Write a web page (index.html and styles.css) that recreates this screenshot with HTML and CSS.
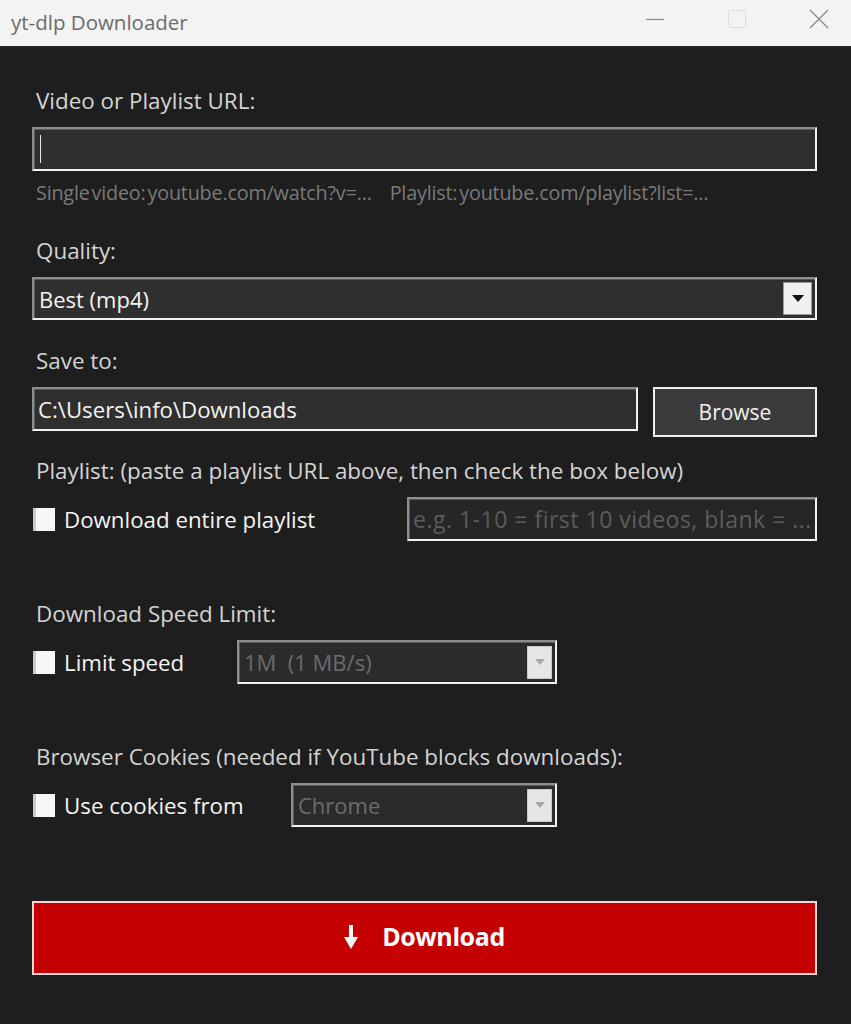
FILE: index.html
```html
<!DOCTYPE html>
<html lang="en">
<head>
<meta charset="utf-8">
<title>yt-dlp Downloader</title>
<link rel="stylesheet" href="styles.css">
</head>
<body>
<div class="window">
  <header class="titlebar">
    <span class="title">yt-dlp Downloader</span>
    <div class="controls">
      <span class="ctl ctl-min"><svg width="20" height="20" viewBox="0 0 20 20"><line x1="1" y1="10.5" x2="19" y2="10.5" stroke="#8a8a8a" stroke-width="1.2"/></svg></span>
      <span class="ctl ctl-max"><svg width="20" height="20" viewBox="0 0 20 20"><rect x="1.5" y="1.5" width="17" height="17" rx="1" fill="none" stroke="#dedede" stroke-width="1"/></svg></span>
      <span class="ctl ctl-close"><svg width="20" height="20" viewBox="0 0 20 20"><path d="M1 1 L19 19 M19 1 L1 19" stroke="#8a8a8a" stroke-width="1.3" fill="none"/></svg></span>
    </div>
  </header>

  <main class="content">
    <div class="label first">Video or Playlist URL:</div>
    <div class="field field-url"><span class="caret"></span></div>
    <div class="hint"><span>Single video: youtube.com/watch?v=...</span><span>Playlist: youtube.com/playlist?list=...</span></div>

    <div class="label sec-quality">Quality:</div>
    <div class="combo combo-quality">
      <span class="combo-text">Best (mp4)</span>
      <span class="combo-btn"><svg width="12" height="8" viewBox="0 0 12 8"><path d="M0 0 H12 L6 7 Z" fill="#111"/></svg></span>
    </div>

    <div class="label sec-save">Save to:</div>
    <div class="row row-save">
      <div class="field field-path"><span class="field-text">C:\Users\info\Downloads</span></div>
      <button class="btn-browse">Browse</button>
    </div>

    <div class="label sec-playlist">Playlist: (paste a playlist URL above, then check the box below)</div>
    <div class="row row-check">
      <label class="check check-playlist"><span class="box"></span><span class="check-text">Download entire playlist</span></label>
      <div class="field field-range"><span class="placeholder">e.g. 1-10 = first 10 videos, blank = ...</span></div>
    </div>

    <div class="label sec-speed">Download Speed Limit:</div>
    <div class="row row-check">
      <label class="check check-speed"><span class="box"></span><span class="check-text">Limit speed</span></label>
      <div class="combo combo-disabled combo-speed">
        <span class="combo-text">1M&nbsp; (1 MB/s)</span>
        <span class="combo-btn"><svg width="10" height="6" viewBox="0 0 10 6"><path d="M0 0 H10 L5 6 Z" fill="#a8a8a8"/></svg></span>
      </div>
    </div>

    <div class="label sec-cookies">Browser Cookies (needed if YouTube blocks downloads):</div>
    <div class="row row-check">
      <label class="check check-cookies"><span class="box"></span><span class="check-text">Use cookies from</span></label>
      <div class="combo combo-disabled combo-cookies">
        <span class="combo-text">Chrome</span>
        <span class="combo-btn"><svg width="10" height="6" viewBox="0 0 10 6"><path d="M0 0 H10 L5 6 Z" fill="#a8a8a8"/></svg></span>
      </div>
    </div>

    <button class="btn-download">
      <svg class="dl-icon" width="14" height="24" viewBox="0 0 14 24"><rect x="5" y="0" width="4" height="14" fill="#fff"/><path d="M0 12 H14 L7 24 Z" fill="#fff"/></svg>
      <span>Download</span>
    </button>
  </main>
</div>
</body>
</html>
```

FILE: styles.css
```css
* { box-sizing: border-box; }

html, body {
  margin: 0;
  padding: 0;
  background: #1e1e1e;
}

body {
  font-family: "Open Sans", "Noto Sans", sans-serif;
  width: 851px;
  height: 1024px;
  overflow: hidden;
}

.window {
  width: 851px;
  height: 1024px;
  display: flex;
  flex-direction: column;
}

.titlebar {
  height: 47px;
  background: #f3f3f3;
  border-bottom: 1px solid #2a2a2a;
  display: flex;
  align-items: center;
  justify-content: space-between;
  padding-left: 11px;
  padding-right: 22px;
}

.title {
  font-family: "Open Sans", sans-serif;
  font-size: 20.5px;
  color: #6b6b6b;
  margin-top: -3px;
}

.controls {
  display: flex;
  align-items: center;
  gap: 62px;
  margin-top: -8px;
}

.ctl {
  display: flex;
}

.content {
  padding: 42px 34px 0 32px;
  display: flex;
  flex-direction: column;
}

.label {
  font-size: 22.4px;
  line-height: 24px;
  color: #d4d4d4;
  padding-left: 4px;
  white-space: nowrap;
}

.sec-quality { margin-top: 36px; }
.sec-save { margin-top: 29px; }
.sec-playlist { margin-top: 22px; }
.sec-speed { margin-top: 61px; }
.sec-cookies { margin-top: 61px; }

.field {
  height: 44px;
  background: #2f2f2f;
  border: 2px solid;
  border-color: #8e8e8e #f2f2f2 #f2f2f2 #8e8e8e;
  box-shadow: inset 1px 1px 0 #5a5a5a;
  display: flex;
  align-items: center;
  padding-left: 4px;
  overflow: hidden;
}

.field-url {
  margin-top: 14px;
  width: 785px;
}

.caret {
  display: block;
  width: 1px;
  height: 28px;
  background: #e8e8e8;
  margin-left: 2px;
}

.hint {
  margin-top: 12px;
  height: 20px;
  line-height: 20px;
  font-size: 19.8px;
  color: #7a7a7a;
  padding-left: 4px;
  letter-spacing: -0.2px;
  word-spacing: -3px;
  display: flex;
  gap: 18px;
  white-space: nowrap;
}

.combo {
  height: 43px;
  background: #2f2f2f;
  border: 2px solid;
  border-color: #8e8e8e #f2f2f2 #f2f2f2 #8e8e8e;
  box-shadow: inset 1px 1px 0 #5a5a5a;
  display: flex;
  align-items: center;
  justify-content: space-between;
  padding: 0 3px 0 5px;
}

.combo-quality {
  margin-top: 14px;
  width: 785px;
}

.combo-text {
  font-size: 22px;
  color: #f4f4f4;
  white-space: nowrap;
}

.combo-btn {
  width: 29px;
  height: 33px;
  background: #f0f0f0;
  border: 1px solid #9a9a9a;
  display: flex;
  align-items: center;
  justify-content: center;
  flex-shrink: 0;
}

.combo-disabled {
  background: #2b2b2b;
}

.combo-disabled .combo-text {
  color: #6b6b6b;
}

.combo-disabled .combo-btn {
  width: 25px;
  background: #e6e6e6;
  border-color: #c8c8c8;
}

.row {
  display: flex;
  align-items: flex-start;
  margin-top: 14px;
}

.row-save {
  gap: 15px;
}

.field-path {
  width: 606px;
}

.field-text {
  font-size: 22.2px;
  color: #f4f4f4;
  white-space: nowrap;
}

.btn-browse {
  width: 164px;
  height: 50px;
  background: #3b3b3b;
  border: 2px solid #f0f0f0;
  color: #f2f2f2;
  font-family: "Open Sans", sans-serif;
  font-size: 21px;
  padding: 0;
}

.row-check {
  align-items: center;
}

.check {
  display: flex;
  align-items: center;
  flex-shrink: 0;
}

.check-playlist { width: 375px; }
.check-speed { width: 205px; }
.check-cookies { width: 259px; }

.box {
  width: 22px;
  height: 23px;
  background: #f7f7f7;
  border-left: 3px solid #c9c9c9;
  margin-left: 1px;
  margin-right: 9px;
}

.check-text {
  font-size: 22.3px;
  color: #f4f4f4;
  white-space: nowrap;
}

.field-range {
  width: 410px;
  background: #262626;
}

.placeholder {
  font-size: 23px;
  color: #5c5c5c;
  white-space: nowrap;
  letter-spacing: 0.5px;
}

.combo-speed { width: 320px; height: 44px; }
.combo-cookies { width: 266px; height: 44px; }

.btn-download {
  margin-top: 74px;
  width: 785px;
  height: 74px;
  background: #c50000;
  border: 2px solid #f3d6d6;
  color: #ffffff;
  display: flex;
  align-items: center;
  justify-content: center;
  gap: 24px;
  font-family: "Open Sans", sans-serif;
  font-weight: 700;
  font-size: 25px;
  letter-spacing: -0.4px;
  padding: 0 0 4px 0;
}

.dl-icon {
  margin-top: 2px;
}
```
